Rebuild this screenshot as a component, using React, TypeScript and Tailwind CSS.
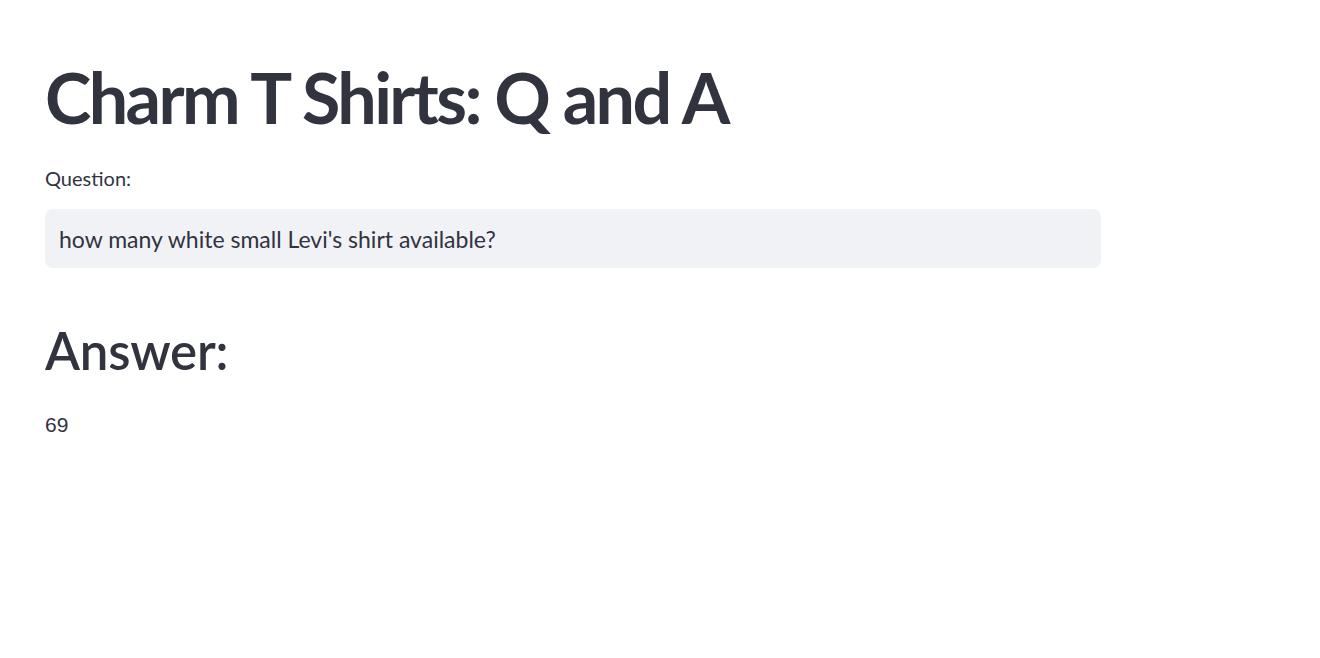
import React from "react";

export default function App() {
  return (
    <div className="min-h-screen w-full bg-white text-[#31333F]" style={{ fontFamily: "Lato, 'Noto Sans', sans-serif" }}>
      <div className="w-[1056px] ml-[45px] pt-[62px] flex flex-col">
        <h1 className="text-[70px] font-bold leading-none tracking-[-2.6px]">Charm T Shirts: Q and A</h1>

        <label className="mt-[36px] text-[20px] leading-none">Question:</label>
        <div className="mt-[21px] h-[59px] rounded-lg bg-[#F0F2F6] flex items-center px-[14px]">
          <span className="text-[23px] translate-y-[1px]">how many white small Levi's shirt available?</span>
        </div>

        <h2 className="mt-[57px] text-[51px] font-semibold leading-none tracking-[-0.2px]">Answer:</h2>
        <p className="mt-[38px] text-[21px] leading-none" style={{ fontFamily: "'Liberation Sans', Arial, sans-serif" }}>69</p>
      </div>
    </div>
  );
}
